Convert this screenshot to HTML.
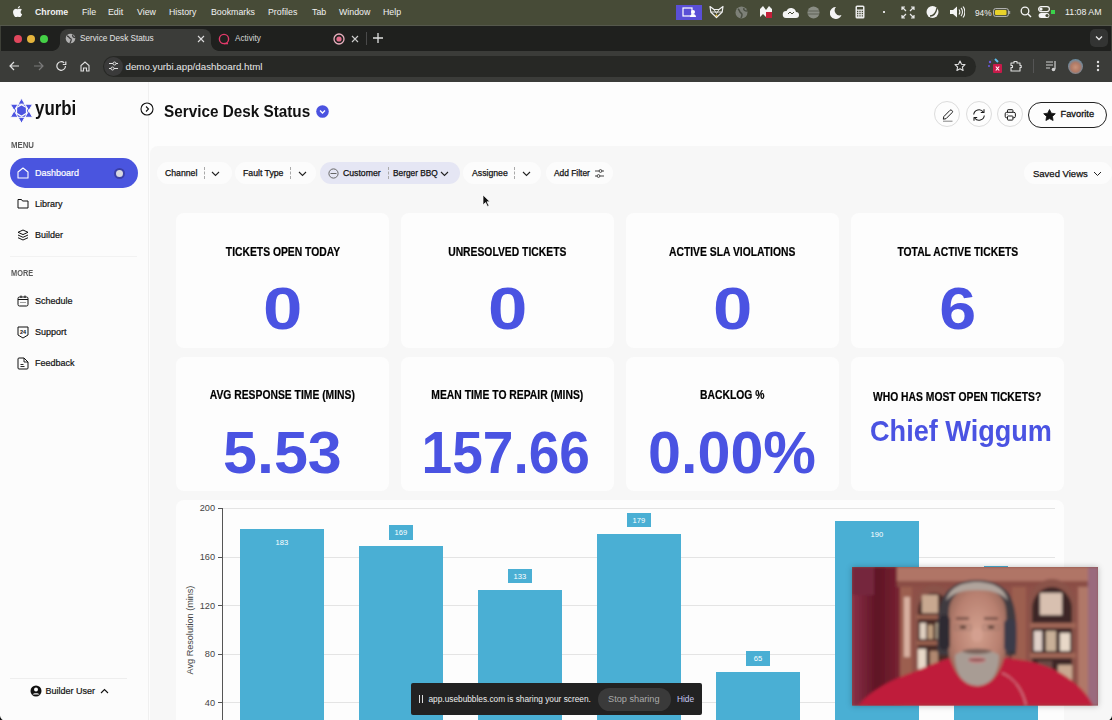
<!DOCTYPE html>
<html><head><meta charset="utf-8">
<style>
*{box-sizing:border-box;margin:0;padding:0}
html,body{width:1112px;height:720px;overflow:hidden;background:#fff;font-family:"Liberation Sans",sans-serif}
.abs{position:absolute}
svg{display:block}
span.abs,div.t{white-space:nowrap}
#menubar{position:absolute;left:0;top:0;width:1112px;height:25px;background:#474b37;color:#f2f2f2;font-size:8.8px}
#menubar span{position:absolute;top:7px;white-space:nowrap}
#tabstrip{position:absolute;left:0;top:25px;width:1112px;height:26px;background:#1f201e}
#toolbar{position:absolute;left:0;top:51px;width:1112px;height:31px;background:#3b3c39}
#page{position:absolute;left:0;top:82px;width:1112px;height:638px;background:#fdfdfd}
#sidebar{position:absolute;left:0;top:0;width:149px;height:638px;background:#fcfcfc;border-right:1px solid #f0f0f0}
#main{position:absolute;left:150px;top:64px;width:962px;height:574px;background:#f7f7f7;border-top-left-radius:8px}
.nav{position:absolute;left:35px;font-size:9px;color:#111;-webkit-text-stroke:.2px currentColor}
.chip{position:absolute;top:80px;height:22px;background:#fcfcfc;border-radius:11px}
.ct{position:absolute;font-size:8.7px;color:#111;white-space:nowrap;-webkit-text-stroke:.25px #111}
.dv{position:absolute;width:0;height:12px;border-left:1px dashed #aaa}
.card{position:absolute;background:#fdfdfd;border-radius:8px;width:213px;height:135px}
.ctitle{position:absolute;left:0;right:0;text-align:center;font-weight:bold;font-size:11.5px;color:#000;white-space:nowrap;-webkit-text-stroke:.2px #000}
.cval{position:absolute;left:0;right:0;text-align:center;font-weight:bold;color:#4a53e2;white-space:nowrap}
.hb{position:absolute;top:19.500px;width:26px;height:26px;border-radius:50%;border:1px solid #dcdcdc;background:#fdfdfd}
.tick{position:absolute;font-size:9px;color:#444;text-align:right;width:30px}
.bar{position:absolute;background:#4aafd4}
.blab{position:absolute;font-size:7.500px;color:#fff;text-align:center}
.bbox{position:absolute;background:#4aafd4;height:14px;width:21px}
</style></head><body>
<div id="menubar">
  <svg class="abs" style="left:13px;top:6.300px" width="9.500" height="11" viewBox="0 0 170 200"><path fill="#f4f4f4" d="M139 106c0-25 21-37 22-38-12-17-30-20-37-20-16-2-31 9-39 9s-21-9-34-9C33 49 17 59 8 75c-18 32-5 79 13 104 9 13 19 27 32 26 13 0 18-8 33-8s20 8 33 8c14 0 23-13 31-25 10-15 14-29 14-30 0 0-27-10-27-44zM114 32c7-9 12-21 11-32-10 0-23 7-30 16-7 7-13 19-11 31 11 1 23-6 30-15z"/></svg>
  <span style="left:35px;font-weight:bold">Chrome</span>
  <span style="left:82px">File</span>
  <span style="left:108px">Edit</span>
  <span style="left:137px">View</span>
  <span style="left:169px">History</span>
  <span style="left:211px">Bookmarks</span>
  <span style="left:268px">Profiles</span>
  <span style="left:312px">Tab</span>
  <span style="left:339px">Window</span>
  <span style="left:383px">Help</span>
  <div class="abs" style="left:676px;top:5px;width:26px;height:15px;background:#5a4fd6"></div>
  <svg class="abs" style="left:682px;top:7px" width="15" height="11" viewBox="0 0 15 11"><rect x="1" y="1" width="9" height="8" fill="none" stroke="#fff" stroke-width="1.2"/><circle cx="11" cy="5" r="2" fill="#fff"/><path d="M8 10c0-2 1.5-3 3-3s3 1 3 3z" fill="#fff"/></svg>
  <svg class="abs" style="left:709px;top:5px" width="15" height="14" viewBox="0 0 15 14"><path d="M1 1.500l4 3h5l4-3-.8 5.500L7.500 12.500 1.800 7z" fill="none" stroke="#f0f0f0" stroke-width="1.200" stroke-linejoin="round"/><path d="M1.800 7h11.400M5 4.500l2.500 4 2.500-4" stroke="#f0f0f0" stroke-width=".9" fill="none"/><circle cx="7.500" cy="10.500" r="1" fill="#e8c040"/></svg>
  <svg class="abs" style="left:735px;top:6px" width="13" height="13" viewBox="0 0 13 13"><circle cx="6.5" cy="6.5" r="6" fill="#7d8077"/><path d="M3 3c2 1 1 3 3 4s1 3 0 5M9 2c-1 2 1 3 3 3" stroke="#4a4e42" stroke-width="1.5" fill="none"/></svg>
  <svg class="abs" style="left:759px;top:5px" width="14" height="14" viewBox="0 0 14 14"><path d="M1 12V4l3-3 3 4 3-4 3 3v8l-3-3-3 3-3-3z" fill="#f4f4f4"/><rect x="7" y="7" width="6" height="6" fill="#c4203a"/></svg>
  <svg class="abs" style="left:782px;top:5px" width="17" height="14" viewBox="0 0 17 14"><path d="M4 13h10a3 3 0 0 0 0-6 5 5 0 0 0-9.500-1A3.500 3.500 0 0 0 4 13z" fill="#f4f4f4"/><path d="M6 9l2-2 2 2 2-2" stroke="#474b37" stroke-width="1" fill="none"/></svg>
  <svg class="abs" style="left:807px;top:6px" width="13" height="13" viewBox="0 0 13 13"><circle cx="6.5" cy="6.5" r="6" fill="#8a8d84"/><path d="M1 5h11M1 8h11" stroke="#5e6257" stroke-width="1.2"/></svg>
  <svg class="abs" style="left:830px;top:6px" width="12" height="13" viewBox="0 0 12 13"><path d="M6 1a6 6 0 1 0 5.500 8A5 5 0 0 1 6 1z" fill="#f4f4f4"/></svg>
  <svg class="abs" style="left:855px;top:5px" width="10" height="14" viewBox="0 0 10 14"><rect x=".5" y=".5" width="9" height="13" rx="1.500" fill="#ececec"/><rect x="2" y="2" width="6" height="2.500" fill="#474b37"/><path d="M2 6.500h1.300M4.350 6.500h1.300M6.700 6.500h1.300M2 8.700h1.300M4.350 8.700h1.300M6.700 8.700h1.300M2 10.900h1.300M4.350 10.900h1.300M6.700 10.900h1.300" stroke="#474b37" stroke-width="1.300"/></svg>
  <div class="abs" style="left:883px;top:11px;width:1.500px;height:1.500px;background:#ddd"></div>
  <svg class="abs" style="left:901px;top:6px" width="14" height="13" viewBox="0 0 14 13"><path d="M1 4V1h3M10 1h3v3M13 9v3h-3M4 12H1V9M1 1l4 4M13 1l-4 4M13 12l-4-4M1 12l4-4" stroke="#e8e8e8" stroke-width="1.200" fill="none"/></svg>
  <svg class="abs" style="left:926px;top:5px" width="13" height="14" viewBox="0 0 13 14"><circle cx="6.500" cy="7" r="6" fill="#f4f4f4"/><path d="M4 11c3 0 6-3 7-8" stroke="#474b37" stroke-width="1.300" fill="none"/></svg>
  <svg class="abs" style="left:949px;top:5px" width="16" height="14" viewBox="0 0 16 14"><path d="M1 5h3l4-3.500v11L4 9H1z" fill="#f4f4f4"/><path d="M10 4.500c1 1.500 1 3.500 0 5M12 3c2 2 2 6 0 8M14 1.500c2.500 3 2.500 8 0 11" stroke="#f4f4f4" stroke-width="1.100" fill="none"/></svg>
  <span style="left:975px;font-size:8.3px;top:7.5px">94%</span>
  <svg class="abs" style="left:993px;top:8px" width="18" height="9" viewBox="0 0 18 9"><rect x=".6" y=".6" width="14.800" height="7.800" rx="2" fill="none" stroke="#bbb" stroke-width="1"/><rect x="2" y="2" width="11.500" height="5" rx="1" fill="#e8d22a"/><rect x="16" y="3" width="1.200" height="3" fill="#999"/></svg>
  <svg class="abs" style="left:1020px;top:6px" width="12" height="12" viewBox="0 0 12 12"><circle cx="5" cy="5" r="3.800" fill="none" stroke="#f4f4f4" stroke-width="1.300"/><path d="M8 8l3 3" stroke="#f4f4f4" stroke-width="1.400"/></svg>
  <svg class="abs" style="left:1038px;top:6px" width="12" height="13" viewBox="0 0 12 13"><rect x=".6" y=".6" width="10.800" height="5" rx="2.500" fill="none" stroke="#f4f4f4" stroke-width="1.200"/><circle cx="3" cy="3.100" r="1.600" fill="#f4f4f4"/><rect x=".6" y="7" width="10.800" height="5" rx="2.500" fill="#f4f4f4"/><circle cx="9" cy="9.500" r="1.600" fill="#474b37"/></svg>
  <div class="abs" style="left:1051px;top:10px;width:4px;height:4px;background:#3ad24a"></div>
  <span style="left:1065px">11:08 AM</span>
</div>
<div id="tabstrip">
  <div class="abs" style="left:0;top:0;width:1112px;height:1px;background:#55584c"></div>
  <div class="abs" style="left:0;top:1px;width:1px;height:56px;background:#3e4038"></div>
  <div class="abs" style="left:1111px;top:1px;width:1px;height:56px;background:#3e4038"></div>
  <div class="abs" style="left:13.800px;top:10.100px;width:8px;height:8px;border-radius:50%;background:#e0475d"></div>
  <div class="abs" style="left:26.600px;top:10.100px;width:8px;height:8px;border-radius:50%;background:#e4b43c"></div>
  <div class="abs" style="left:39.800px;top:10.100px;width:8px;height:8px;border-radius:50%;background:#44d046"></div>
  <div class="abs" style="left:60px;top:3.700px;width:151px;height:22.300px;background:#3b3c39;border-radius:8px 8px 0 0"></div>
  <div class="abs" style="left:52px;top:18px;width:8px;height:8px;background:radial-gradient(circle at 0 0,transparent 7.500px,#3b3c39 8.200px)"></div>
  <div class="abs" style="left:211px;top:18px;width:8px;height:8px;background:radial-gradient(circle at 8px 0,transparent 7.500px,#3b3c39 8.200px)"></div>
  <svg class="abs" style="left:65px;top:8px" width="11" height="11" viewBox="0 0 11 11"><circle cx="5.500" cy="5.500" r="4.800" fill="#b0b0b0"/><path d="M2 3c2 0 2 2 3.500 2.500S6 8 5 10M8 1.500c-1 1.500 0 3 2.500 3" stroke="#3b3b3b" stroke-width="1.300" fill="none"/></svg>
  <span class="abs" style="left:80px;top:9.300px;font-size:8.200px;color:#e4e4e4;white-space:nowrap">Service Desk Status</span>
  <svg class="abs" style="left:196.500px;top:9.500px" width="8" height="8" viewBox="0 0 8 8"><path d="M1 1l6 6M7 1L1 7" stroke="#ddd" stroke-width="1.100"/></svg>
  <svg class="abs" style="left:218px;top:7.500px" width="12" height="12" viewBox="0 0 12 12"><circle cx="6" cy="6" r="4.600" fill="none" stroke="#e23a6a" stroke-width="1.400"/><path d="M6 10.600h4" stroke="#e23a6a" stroke-width="1.400"/></svg>
  <span class="abs" style="left:235px;top:9.300px;font-size:8.200px;color:#d6d6d6">Activity</span>
  <svg class="abs" style="left:333px;top:7.500px" width="12" height="12" viewBox="0 0 12 12"><circle cx="6" cy="6" r="5" fill="none" stroke="#e8b0bf" stroke-width="1.300"/><circle cx="6" cy="6" r="2.600" fill="#e46a8a"/></svg>
  <svg class="abs" style="left:351px;top:9.500px" width="8" height="8" viewBox="0 0 8 8"><path d="M1 1l6 6M7 1L1 7" stroke="#ccc" stroke-width="1.100"/></svg>
  <div class="abs" style="left:366px;top:7px;width:1px;height:13px;background:#4a4a4a"></div>
  <svg class="abs" style="left:373px;top:8px" width="10" height="10" viewBox="0 0 10 10"><path d="M5 0v10M0 5h10" stroke="#e0e0e0" stroke-width="1.300"/></svg>
  <div class="abs" style="left:1090px;top:4px;width:18px;height:18px;border-radius:5px;background:#333433"></div>
  <svg class="abs" style="left:1095px;top:10px" width="8" height="6" viewBox="0 0 8 6"><path d="M1 1.500l3 3 3-3" stroke="#e8e8e8" stroke-width="1.300" fill="none"/></svg>
</div>
<div id="toolbar">
  <svg class="abs" style="left:9px;top:10px" width="11" height="10" viewBox="0 0 11 10"><path d="M10 5H1.500M5 1L1 5l4 4" stroke="#e0e0e0" stroke-width="1.200" fill="none"/></svg>
  <svg class="abs" style="left:32.500px;top:10px" width="11" height="10" viewBox="0 0 11 10"><path d="M1 5h8.500M6 1l4 4-4 4" stroke="#7a7a7a" stroke-width="1.200" fill="none"/></svg>
  <svg class="abs" style="left:56px;top:10px" width="11" height="10" viewBox="0 0 11 10"><path d="M9.500 5a4.300 4.300 0 1 1-1.300-3.100" stroke="#e0e0e0" stroke-width="1.200" fill="none"/><path d="M9.800 .5v3H6.800" stroke="#e0e0e0" stroke-width="1.200" fill="none"/></svg>
  <svg class="abs" style="left:79.500px;top:9.5px" width="10" height="11" viewBox="0 0 10 11"><path d="M1 10V4.500L5 1l4 3.500V10H6.500V7h-3v3z" stroke="#e0e0e0" stroke-width="1.100" fill="none"/></svg>
  <div class="abs" style="left:102.500px;top:4.5px;width:873px;height:21px;background:#272825;border-radius:10.500px"></div>
  <div class="abs" style="left:103.500px;top:5.5px;width:19px;height:19px;background:#3a3a3a;border-radius:50%"></div>
  <svg class="abs" style="left:107.500px;top:9.5px" width="11" height="10" viewBox="0 0 11 10"><path d="M1 2.500h4M8 2.500h2M1 7.500h2M6 7.500h4" stroke="#e0e0e0" stroke-width="1.100"/><circle cx="6.500" cy="2.500" r="1.500" fill="none" stroke="#e0e0e0" stroke-width="1"/><circle cx="4.500" cy="7.500" r="1.500" fill="none" stroke="#e0e0e0" stroke-width="1"/></svg>
  <span class="abs" style="left:125.500px;top:9.5px;font-size:9.740px;color:#e8e8e8;white-space:nowrap">demo.yurbi.app/dashboard.html</span>
  <svg class="abs" style="left:953.500px;top:8.5px" width="12" height="12" viewBox="0 0 12 12"><path d="M6 1l1.500 3.200 3.500.4-2.600 2.400.7 3.500L6 8.800 2.900 10.500l.7-3.500L1 4.600l3.500-.4z" stroke="#e0e0e0" stroke-width="1.100" fill="none" stroke-linejoin="round"/></svg>
  <svg class="abs" style="left:987px;top:6px" width="16" height="17" viewBox="0 0 16 17"><circle cx="3" cy="5" r="1.200" fill="#6a5ae0"/><circle cx="2" cy="9" r="1" fill="#6a5ae0"/><circle cx="5" cy="3" r="1" fill="#444"/><path d="M8 2l3 3" stroke="#5fc0f0" stroke-width="2"/><rect x="6" y="7" width="9" height="9" rx="1" fill="#c81a4a"/><path d="M8.800 9.500l3.400 4M12.200 9.500l-3.400 4" stroke="#fff" stroke-width="1.100"/></svg>
  <svg class="abs" style="left:1010px;top:8.5px" width="12" height="12" viewBox="0 0 12 12"><path d="M1 3h3V1.500h3V3h3v2.500h1.200v2H10V11H1V7.500h1.500v-2H1z" stroke="#e0e0e0" stroke-width="1.100" fill="none" stroke-linejoin="round"/></svg>
  <div class="abs" style="left:1033px;top:8px;width:1px;height:14px;background:#555"></div>
  <svg class="abs" style="left:1045px;top:9px" width="12" height="12" viewBox="0 0 12 12"><path d="M1 2h7M1 5h7M1 8h4" stroke="#d0d0d0" stroke-width="1.200"/><path d="M10 1v8" stroke="#d0d0d0" stroke-width="1.200"/><circle cx="8.500" cy="9.500" r="1.800" fill="#d0d0d0"/></svg>
  <div class="abs" style="left:1067.500px;top:7.5px;width:15px;height:15px;border-radius:50%;background:radial-gradient(circle at 50% 55%,#c9937a 0,#b07a66 40%,#6a8aa0 70%,#c8b850 100%)"></div>
  <svg class="abs" style="left:1096px;top:9px" width="4" height="12" viewBox="0 0 4 12"><circle cx="2" cy="2" r="1.200" fill="#e0e0e0"/><circle cx="2" cy="6" r="1.200" fill="#e0e0e0"/><circle cx="2" cy="10" r="1.200" fill="#e0e0e0"/></svg>
</div>
<div id="page">
  <div id="sidebar">
    <svg class="abs" style="left:9.500px;top:15.500px" width="23" height="25.500" viewBox="0 0 23 25.500"><path d="M11.500 .3L22.600 19.300H.4zM11.500 25.200L.4 6.200H22.600z" fill="#4b53e0"/><path d="M11.500 .3L22.600 19.300H.4zM11.500 25.200L.4 6.200H22.600z" fill="none" stroke="#fcfcfc" stroke-width="1" stroke-linejoin="round"/><path d="M11.500 6.600l5 2.900v5.800l-5 2.900-5-2.900V9.500z" fill="#4b53e0" stroke="#fcfcfc" stroke-width="1.300"/></svg>
    <div class="abs t" style="left:35px;top:15px;font-size:19.500px;font-weight:bold;color:#111;transform:scaleX(.866);transform-origin:0 50%">yurbi</div>
    <div class="abs t" style="left:11px;top:57.500px;font-size:8.300px;font-weight:bold;color:#5a5a5a;transform:scaleX(.94);transform-origin:0 50%">MENU</div>
    <div class="abs" style="left:10px;top:76px;width:128px;height:30px;background:#4a55df;border-radius:15px"></div>
    <svg class="abs" style="left:17px;top:85px" width="12" height="12" viewBox="0 0 12 12"><path d="M1 11V5l5-4 5 4v6z" stroke="#fff" stroke-width="1.100" fill="none" stroke-linejoin="round"/></svg>
    <div class="nav t" style="top:86px;color:#fff">Dashboard</div>
    <div class="abs" style="left:113.500px;top:85.500px;width:11px;height:11px;border-radius:50%;background:#3a3fa8"></div>
    <div class="abs" style="left:115.500px;top:87.500px;width:7px;height:7px;border-radius:50%;background:#d8d8e0"></div>
    <svg class="abs" style="left:17px;top:116px" width="12" height="11" viewBox="0 0 12 11"><path d="M1 1.500h3.500l1 1.500H11v7H1z" stroke="#111" stroke-width="1" fill="none" stroke-linejoin="round"/></svg>
    <div class="nav t" style="top:117px">Library</div>
    <svg class="abs" style="left:17px;top:147px" width="12" height="12" viewBox="0 0 12 12"><path d="M6 1l5 2.300-5 2.300-5-2.300z" stroke="#111" stroke-width="1" fill="none"/><path d="M1 6l5 2.300L11 6M1 8.700L6 11l5-2.300" stroke="#111" stroke-width="1" fill="none"/></svg>
    <div class="nav t" style="top:148px">Builder</div>
    <div class="abs" style="left:10px;top:174px;width:127px;height:1px;background:#f2f2f2"></div>
    <div class="abs t" style="left:11px;top:186px;font-size:8.300px;font-weight:bold;color:#5a5a5a;transform:scaleX(.89);transform-origin:0 50%">MORE</div>
    <svg class="abs" style="left:17px;top:213px" width="12" height="12" viewBox="0 0 12 12"><rect x="1" y="2" width="10" height="9" rx="1.500" stroke="#111" stroke-width="1" fill="none"/><path d="M1 4.500h10M4 .5v2.500M8 .5v2.500" stroke="#111" stroke-width="1"/><path d="M3.500 7.500h1M5.500 7.500h1M7.500 7.500h1" stroke="#111" stroke-width=".8"/></svg>
    <div class="nav t" style="top:214px">Schedule</div>
    <svg class="abs" style="left:17px;top:244px" width="12" height="13" viewBox="0 0 12 13"><path d="M1 1h10v8l-5 3-5-3z" stroke="#111" stroke-width="1" fill="none"/><text x="6" y="8" font-size="5.500" font-weight="bold" text-anchor="middle" fill="#111" font-family="Liberation Sans">24</text></svg>
    <div class="nav t" style="top:245px">Support</div>
    <svg class="abs" style="left:17px;top:275px" width="12" height="13" viewBox="0 0 12 13"><path d="M1 2a1 1 0 0 1 1-1h5l4 4v6a1 1 0 0 1-1 1H2a1 1 0 0 1-1-1z" stroke="#111" stroke-width="1" fill="none"/><path d="M7 1v4h4M3.500 7.500h3M3.500 9.500h4" stroke="#111" stroke-width=".9" fill="none"/></svg>
    <div class="nav t" style="top:276px">Feedback</div>
    <div class="abs" style="left:10px;top:596px;width:117px;height:1px;background:#eeeeee"></div>
    <svg class="abs" style="left:29.500px;top:603px" width="12" height="12" viewBox="0 0 12 12"><circle cx="6" cy="6" r="5.500" fill="#111"/><circle cx="6" cy="4.500" r="2" fill="#fcfcfc"/><path d="M2.500 9.500c1-1.800 6-1.800 7 0" fill="#fcfcfc"/></svg>
    <div class="nav t" style="left:45.500px;top:604px">Builder User</div>
    <svg class="abs" style="left:100px;top:605.500px" width="9" height="6" viewBox="0 0 9 6"><path d="M1 5l3.500-3.500L8 5" stroke="#111" stroke-width="1.100" fill="none"/></svg>
  </div>
  <svg class="abs" style="left:140px;top:20px" width="14" height="14" viewBox="0 0 14 14"><circle cx="7" cy="7" r="6" stroke="#111" stroke-width="1.100" fill="#fff"/><path d="M6 4.500L8.500 7 6 9.500" stroke="#111" stroke-width="1.100" fill="none"/></svg>
  <div class="abs t" style="left:163.500px;top:20px;font-size:16.700px;font-weight:bold;color:#111;transform:scaleX(.916);transform-origin:0 50%">Service Desk Status</div>
  <svg class="abs" style="left:315.500px;top:22.500px" width="13" height="13" viewBox="0 0 13 13"><circle cx="6.500" cy="6.500" r="6.300" fill="#4b53e0"/><path d="M4 5.500l2.500 2.500L9 5.500" stroke="#fff" stroke-width="1.300" fill="none"/></svg>
  <div class="hb" style="left:934px;top:19.300px"></div>
  <svg class="abs" style="left:941px;top:26px" width="14" height="14" viewBox="0 0 14 14"><path d="M2.300 11.200l.5-2.600 6.100-6.200a1.300 1.300 0 0 1 1.900 0l.3.3a1.300 1.300 0 0 1 0 1.900L5 10.700z" stroke="#1a1a1a" stroke-width="1" fill="none" stroke-linejoin="round"/><path d="M2 13.200h9.500" stroke="#777" stroke-width=".9"/></svg>
  <div class="hb" style="left:965.500px;top:19.300px"></div>
  <svg class="abs" style="left:972px;top:25.500px" width="14" height="14" viewBox="0 0 14 14"><path d="M1.700 6.500A5.300 5.300 0 0 1 11.300 4M12.300 7.500A5.300 5.300 0 0 1 2.700 10" stroke="#1a1a1a" stroke-width="1.050" fill="none"/><path d="M12 1.300v3.200H8.800M2 12.700V9.500h3.200" stroke="#1a1a1a" stroke-width="1.050" fill="none" stroke-linejoin="round"/></svg>
  <div class="hb" style="left:997px;top:19.300px"></div>
  <svg class="abs" style="left:1002.500px;top:25.500px" width="15" height="14" viewBox="0 0 15 14"><rect x="4.500" y="1.700" width="5.400" height="3.200" rx=".6" stroke="#1a1a1a" stroke-width="1" fill="none"/><rect x="2.200" y="4.300" width="10.200" height="5.500" rx="1.500" stroke="#1a1a1a" stroke-width="1" fill="#fdfdfd"/><rect x="4.500" y="8" width="5.400" height="4.100" rx=".6" stroke="#1a1a1a" stroke-width="1" fill="#fdfdfd"/><circle cx="4.200" cy="6.300" r=".6" fill="#888"/></svg>
  <div class="abs" style="left:1028px;top:19.500px;width:79px;height:26.500px;border-radius:13.500px;border:1px solid #222;background:#fdfdfd"></div>
  <svg class="abs" style="left:1042.500px;top:26.500px" width="13" height="12" viewBox="0 0 13 12"><path d="M6.500 .5l1.800 3.700 4 .5-2.900 2.800.7 4L6.500 9.600 2.900 11.500l.7-4L.7 4.700l4-.5z" fill="#111" stroke="#111" stroke-width=".8" stroke-linejoin="round"/></svg>
  <div class="abs t" style="left:1060.500px;top:27px;font-size:9.300px;color:#111;-webkit-text-stroke:.3px #111">Favorite</div>

  <div id="main"></div>
  <!-- filters -->
  <div class="chip" style="left:156.500px;width:75px"></div>
  <div class="ct" style="left:165px;top:86px">Channel</div>
  <div class="dv" style="left:203.500px;top:85px"></div>
  <svg class="abs" style="left:211px;top:88.500px" width="9" height="6" viewBox="0 0 9 6"><path d="M1 1l3.500 3.500L8 1" stroke="#222" stroke-width="1.100" fill="none"/></svg>
  <div class="chip" style="left:234.500px;width:81px"></div>
  <div class="ct" style="left:243px;top:86px">Fault Type</div>
  <div class="dv" style="left:289.500px;top:85px"></div>
  <svg class="abs" style="left:297.500px;top:88.500px" width="9" height="6" viewBox="0 0 9 6"><path d="M1 1l3.500 3.500L8 1" stroke="#222" stroke-width="1.100" fill="none"/></svg>
  <div class="chip" style="left:320px;width:140px;background:#e5e6f4"></div>
  <svg class="abs" style="left:328px;top:85.500px" width="11" height="11" viewBox="0 0 11 11"><circle cx="5.500" cy="5.500" r="4.600" stroke="#666" stroke-width="1" fill="none"/><path d="M2.500 5.500h6" stroke="#666" stroke-width="1"/></svg>
  <div class="ct" style="left:343px;top:86px">Customer</div>
  <div class="dv" style="left:387.500px;top:85px"></div>
  <div class="ct" style="left:393px;top:86px;font-size:8.3px">Berger BBQ</div>
  <svg class="abs" style="left:440px;top:88.500px" width="9" height="6" viewBox="0 0 9 6"><path d="M1 1l3.500 3.500L8 1" stroke="#222" stroke-width="1.100" fill="none"/></svg>
  <div class="chip" style="left:463px;width:78px"></div>
  <div class="ct" style="left:472px;top:86px">Assignee</div>
  <div class="dv" style="left:513.500px;top:85px"></div>
  <svg class="abs" style="left:521.500px;top:88.500px" width="9" height="6" viewBox="0 0 9 6"><path d="M1 1l3.500 3.500L8 1" stroke="#222" stroke-width="1.100" fill="none"/></svg>
  <div class="chip" style="left:546px;width:67px"></div>
  <div class="ct" style="left:554px;top:86px;font-size:8.4px">Add Filter</div>
  <svg class="abs" style="left:594px;top:85.500px" width="11" height="11" viewBox="0 0 11 11"><path d="M1 3h4M8 3h2M1 8h2M6 8h4" stroke="#444" stroke-width="1"/><circle cx="6.500" cy="3" r="1.400" stroke="#444" stroke-width="1" fill="none"/><circle cx="4.500" cy="8" r="1.400" stroke="#444" stroke-width="1" fill="none"/></svg>
  <div class="chip" style="left:1024px;width:88px"></div>
  <div class="ct" style="left:1033px;top:86px;font-size:9.500px">Saved Views</div>
  <svg class="abs" style="left:1092.500px;top:88.500px" width="9" height="6" viewBox="0 0 9 6"><path d="M1 1l3.500 3.500L8 1" stroke="#222" stroke-width="1" fill="none"/></svg>
  <svg class="abs" style="left:482px;top:112px" width="9" height="13" viewBox="0 0 9 13"><path d="M1 1v10l2.500-2.500 2 4 1.500-.7-2-4H8z" fill="#111" stroke="#fff" stroke-width=".7"/></svg>
<div class="card" style="left:176px;top:131px;width:213px;height:135px">
<div class="ctitle" style="top:31.77px;font-size:12.3px"><span style="display:inline-block;transform:scaleX(.841)">TICKETS OPEN TODAY</span></div>
<div class="cval" style="top:60.90px;font-size:60px"><span style="display:inline-block;transform:scaleX(1.18);margin-left:0px">0</span></div>
</div>
<div class="card" style="left:401px;top:131px;width:213px;height:135px">
<div class="ctitle" style="top:31.77px;font-size:12.3px"><span style="display:inline-block;transform:scaleX(.841)">UNRESOLVED TICKETS</span></div>
<div class="cval" style="top:60.90px;font-size:60px"><span style="display:inline-block;transform:scaleX(1.18);margin-left:0px">0</span></div>
</div>
<div class="card" style="left:626px;top:131px;width:213px;height:135px">
<div class="ctitle" style="top:31.77px;font-size:12.3px"><span style="display:inline-block;transform:scaleX(.841)">ACTIVE SLA VIOLATIONS</span></div>
<div class="cval" style="top:60.90px;font-size:60px"><span style="display:inline-block;transform:scaleX(1.18);margin-left:0px">0</span></div>
</div>
<div class="card" style="left:851px;top:131px;width:213px;height:135px">
<div class="ctitle" style="top:31.77px;font-size:12.3px"><span style="display:inline-block;transform:scaleX(.841)">TOTAL ACTIVE TICKETS</span></div>
<div class="cval" style="top:60.90px;font-size:60px"><span style="display:inline-block;transform:scaleX(1.106);margin-left:0px">6</span></div>
</div>
<div class="card" style="left:176px;top:274.5px;width:213px;height:134.5px">
<div class="ctitle" style="top:31.77px;font-size:12.3px"><span style="display:inline-block;transform:scaleX(.841)">AVG RESPONSE TIME (MINS)</span></div>
<div class="cval" style="top:61.30px;font-size:60px"><span style="display:inline-block;transform:scaleX(1.017);margin-left:0px">5.53</span></div>
</div>
<div class="card" style="left:401px;top:274.5px;width:213px;height:134.5px">
<div class="ctitle" style="top:31.77px;font-size:12.3px"><span style="display:inline-block;transform:scaleX(.841)">MEAN TIME TO REPAIR (MINS)</span></div>
<div class="cval" style="top:61.30px;font-size:60px"><span style="display:inline-block;transform:scaleX(0.918);margin-left:-3px">157.66</span></div>
</div>
<div class="card" style="left:626px;top:274.5px;width:213px;height:134.5px">
<div class="ctitle" style="top:31.77px;font-size:12.3px"><span style="display:inline-block;transform:scaleX(.841)">BACKLOG %</span></div>
<div class="cval" style="top:61.30px;font-size:60px"><span style="display:inline-block;transform:scaleX(0.987);margin-left:0px">0.00%</span></div>
</div>
<div class="card" style="left:851px;top:274.5px;width:213px;height:134.5px">
<div class="ctitle" style="top:33.77px;font-size:12.3px"><span style="display:inline-block;transform:scaleX(.841)">WHO HAS MOST OPEN TICKETS?</span></div>
<div class="cval" style="top:58.19px;font-size:28.9px;padding-left:6px"><span style="display:inline-block;transform:scaleX(.938)">Chief Wiggum</span></div>
</div>
<div class="card" style="left:176px;top:418px;width:888px;height:300px"></div>
<div class="abs" style="left:218px;top:425.90px;width:837px;height:1px;background:#e4e4e4"></div>
<div class="abs" style="left:218px;top:425.90px;width:5px;height:1px;background:#555"></div>
<div class="abs t" style="left:185px;width:30px;text-align:right;top:421.37px;font-size:9.2px;color:#444">200</div>
<div class="abs" style="left:218px;top:474.50px;width:837px;height:1px;background:#e4e4e4"></div>
<div class="abs" style="left:218px;top:474.50px;width:5px;height:1px;background:#555"></div>
<div class="abs t" style="left:185px;width:30px;text-align:right;top:469.97px;font-size:9.2px;color:#444">160</div>
<div class="abs" style="left:218px;top:523.10px;width:837px;height:1px;background:#e4e4e4"></div>
<div class="abs" style="left:218px;top:523.10px;width:5px;height:1px;background:#555"></div>
<div class="abs t" style="left:185px;width:30px;text-align:right;top:518.57px;font-size:9.2px;color:#444">120</div>
<div class="abs" style="left:218px;top:571.70px;width:837px;height:1px;background:#e4e4e4"></div>
<div class="abs" style="left:218px;top:571.70px;width:5px;height:1px;background:#555"></div>
<div class="abs t" style="left:185px;width:30px;text-align:right;top:567.17px;font-size:9.2px;color:#444">80</div>
<div class="abs" style="left:218px;top:620.30px;width:837px;height:1px;background:#e4e4e4"></div>
<div class="abs" style="left:218px;top:620.30px;width:5px;height:1px;background:#555"></div>
<div class="abs t" style="left:185px;width:30px;text-align:right;top:615.77px;font-size:9.2px;color:#444">40</div>
<div class="abs" style="left:222px;top:426px;width:1px;height:300px;background:#555"></div>
<div class="abs t" style="left:190.8px;top:547.5px;font-size:9.1px;color:#444;transform:translate(-50%,-50%) rotate(-90deg);line-height:1">Avg Resolution (mins)</div>
<div class="bar" style="left:240.20px;top:447.05px;width:83.5px;height:195.95px"></div>
<div class="abs t" style="left:261.95px;width:40px;text-align:center;top:456.40px;font-size:7.6px;color:#fff">183</div>
<div class="bar" style="left:359.20px;top:464.06px;width:83.5px;height:178.94px"></div>
<div class="abs" style="left:388.95px;top:442.96px;width:24px;height:14.6px;background:#4aafd4"></div>
<div class="abs t" style="left:380.95px;width:40px;text-align:center;top:446.11px;font-size:7.6px;color:#fff">169</div>
<div class="bar" style="left:478.20px;top:507.80px;width:83.5px;height:135.20px"></div>
<div class="abs" style="left:507.95px;top:486.70px;width:24px;height:14.6px;background:#4aafd4"></div>
<div class="abs t" style="left:499.95px;width:40px;text-align:center;top:489.85px;font-size:7.6px;color:#fff">133</div>
<div class="bar" style="left:597.20px;top:451.91px;width:83.5px;height:191.09px"></div>
<div class="abs" style="left:626.95px;top:430.81px;width:24px;height:14.6px;background:#4aafd4"></div>
<div class="abs t" style="left:618.95px;width:40px;text-align:center;top:433.96px;font-size:7.6px;color:#fff">179</div>
<div class="bar" style="left:716.20px;top:590.42px;width:83.5px;height:52.58px"></div>
<div class="abs" style="left:745.95px;top:569.32px;width:24px;height:14.6px;background:#4aafd4"></div>
<div class="abs t" style="left:737.95px;width:40px;text-align:center;top:572.47px;font-size:7.6px;color:#fff">65</div>
<div class="bar" style="left:835.20px;top:438.55px;width:83.5px;height:204.45px"></div>
<div class="abs t" style="left:856.95px;width:40px;text-align:center;top:447.89px;font-size:7.6px;color:#fff">190</div>
<div class="bar" style="left:954.20px;top:505.38px;width:83.5px;height:137.62px"></div>
<div class="abs" style="left:983.95px;top:484.27px;width:24px;height:14.6px;background:#4aafd4"></div>
<div class="abs t" style="left:975.95px;width:40px;text-align:center;top:487.42px;font-size:7.6px;color:#fff">135</div>
<svg class="abs" style="left:851.5px;top:485px;box-shadow:0 0 6px rgba(0,0,0,.25)" width="246.5" height="138.5" viewBox="0 0 246.5 138.5">
<defs><filter id="bl" x="-5%" y="-5%" width="110%" height="110%"><feGaussianBlur stdDeviation="1.6"/></filter>
<filter id="bl2"><feGaussianBlur stdDeviation="0.8"/></filter>
<linearGradient id="cur" x1="0" y1="0" x2="1" y2="0"><stop offset="0" stop-color="#8a3048"/><stop offset=".5" stop-color="#5e1424"/><stop offset="1" stop-color="#7a2434"/></linearGradient>
<radialGradient id="face" cx=".5" cy=".45" r=".55"><stop offset="0" stop-color="#d3a08e"/><stop offset=".7" stop-color="#b88070"/><stop offset="1" stop-color="#9a6a5c"/></radialGradient>
</defs>
<rect width="246.5" height="138.5" fill="#8e5048"/>
<g filter="url(#bl)">
<rect x="0" y="0" width="50" height="138.5" fill="url(#cur)"/>
<rect x="0" y="0" width="22" height="28" fill="#74283e"/>
<rect x="45" y="0" width="195" height="14" fill="#b07466"/>
<rect x="45" y="14" width="195" height="6" fill="#8a4e44"/>
<rect x="48" y="20" width="12" height="118" fill="#9c5e50"/>
<path d="M62 138V40a20 22 0 0 1 40 0v98z" fill="#8a5248"/>
<path d="M66 138V44a16 18 0 0 1 32 0v94z" fill="#4a2a28"/>
<rect x="64" y="48" width="36" height="4" fill="#9a6050"/>
<rect x="64" y="74" width="36" height="4" fill="#9a6050"/>
<rect x="64" y="102" width="36" height="4" fill="#9a6050"/>
<rect x="70" y="28" width="16" height="18" fill="#c8a890"/>
<rect x="68" y="56" width="6" height="16" fill="#e0d0c0"/><rect x="76" y="58" width="5" height="14" fill="#c0a080"/><rect x="84" y="56" width="6" height="16" fill="#d8c8a8"/>
<rect x="66" y="82" width="8" height="20" fill="#e8d8c8"/><rect x="78" y="84" width="8" height="18" fill="#b08870"/>
<rect x="52" y="30" width="6" height="60" fill="#d8b0a0"/>
<rect x="104" y="20" width="10" height="118" fill="#985a4c"/>
<rect x="160" y="20" width="14" height="118" fill="#9c5e50"/>
<path d="M176 138V38a24 26 0 0 1 48 0v100z" fill="#8a5248"/>
<path d="M180 138V42a20 22 0 0 1 40 0v96z" fill="#3e2826"/>
<rect x="178" y="56" width="46" height="5" fill="#a06656"/>
<rect x="178" y="86" width="46" height="5" fill="#a06656"/>
<rect x="188" y="26" width="22" height="22" fill="#d8c0b0"/>
<rect x="182" y="64" width="8" height="20" fill="#e0d0c8"/><rect x="194" y="64" width="10" height="20" fill="#c8b098"/><rect x="208" y="66" width="10" height="18" fill="#e8d8c8"/>
<rect x="186" y="94" width="14" height="20" fill="#6a4a44"/><rect x="206" y="98" width="14" height="22" fill="#c8a890"/>
<rect x="226" y="20" width="12" height="118" fill="#b07868"/>
<rect x="236" y="0" width="10.5" height="138.5" fill="#9a6a7e"/>
<path d="M86 88c-2-30 0-52 8-62 7-9 18-13 31-13s24 4 31 13c8 10 10 32 8 62z" fill="#403a40"/>
<path d="M97 45C97 28 110 20 125 20s29 8 29 25c2 25 0 50-6 61-6 10-14 14-23 14s-17-4-24-14c-5-11-6-36-4-61z" fill="url(#face)"/>
<path d="M94 34c3-13 15-19 31-19s28 6 31 19c-6-8-17-11-31-11s-25 3-31 11z" fill="#b0a49c"/>
<path d="M104 51.500h13M132 51.500h14" stroke="#5a3a34" stroke-width="2.200"/>
<ellipse cx="111" cy="60" rx="3.500" ry="1.600" fill="#4a3028"/><ellipse cx="139" cy="60" rx="3.500" ry="1.600" fill="#4a3028"/>
<path d="M103 58h16v5h-16zM131 58h16v5h-16z" fill="none" stroke="#8a6a60" stroke-width=".6"/>
<path d="M121 62c-2 6-3 12 4 13 7-1 6-7 4-13z" fill="#d4a090"/>
<path d="M103 88c7-5 15-5 22-3 7-2 15-2 22 3 0 17-7 31-22 31s-22-14-22-31z" fill="#a89c94"/>
<path d="M110 84c6-3 24-3 30 0-4 4-26 4-30 0z" fill="#7a6058"/>
<ellipse cx="125" cy="93" rx="9" ry="3.200" fill="#c88080"/>
<path d="M117 92.500c5 1 11 1 16 0" stroke="#5a3030" stroke-width="1"/>
<rect x="87" y="48" width="11" height="35" rx="5" fill="#2e2a30"/><rect x="152" y="52" width="12" height="33" rx="5" fill="#3a3a48"/>
<path d="M160 84c-2 10-5 18-9 24" stroke="#2a2a2a" stroke-width="1.300" fill="none"/>
<path d="M6 138.500C18 124 40 112 64 104c14-6 26-11 34-13 5 16 14 28 28 28 14-1 22-13 26-28 23 1 48 8 63 19 10 7 21 17 26 28.500z" fill="#bf1f3b"/>
<path d="M150 106c10 4 20 14 24 32" stroke="#e0a0b0" stroke-width="1" fill="none"/>
</g>
</svg>
  <div class="abs" style="left:411px;top:601px;width:291px;height:32px;background:#222222;border-radius:2px"></div>
  <div class="abs" style="left:418.500px;top:613px;width:1.300px;height:8px;background:#ddd"></div>
  <div class="abs" style="left:421.500px;top:613px;width:1.300px;height:8px;background:#ddd"></div>
  <div class="abs t" style="left:428.500px;top:612px;font-size:8.300px;color:#eee">app.usebubbles.com is sharing your screen.</div>
  <div class="abs" style="left:598px;top:605.500px;width:72.500px;height:23.500px;background:#3a3a3a;border-radius:12px"></div>
  <div class="abs t" style="left:608px;top:611.500px;font-size:9.200px;color:#aaa">Stop sharing</div>
  <div class="abs t" style="left:677px;top:612px;font-size:8.300px;color:#c8cbf4">Hide</div>
  <div class="abs" style="left:0;top:633px;width:6px;height:5px;background:radial-gradient(circle at 6px 0,transparent 5.500px,#111 6.500px)"></div>
  <div class="abs" style="left:1106px;top:633px;width:6px;height:5px;background:radial-gradient(circle at 0 0,transparent 5.500px,#111 6.500px)"></div>
</div>
</body></html>
